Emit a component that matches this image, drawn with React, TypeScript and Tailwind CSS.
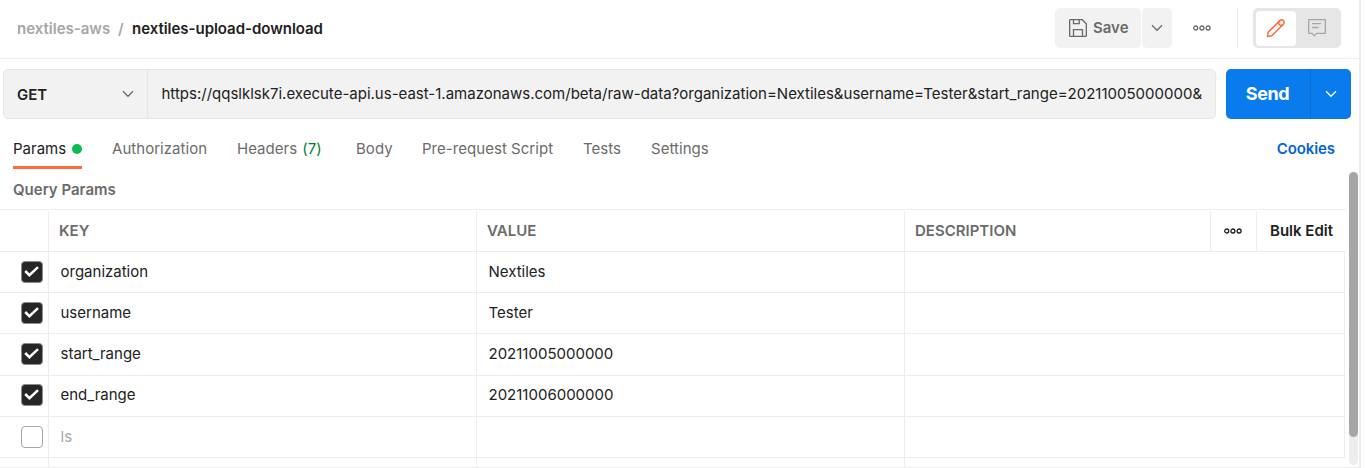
import React from "react";

const PARAMS = [
  { key: "organization", value: "Nextiles", height: "h-[41px]", pad: "pb-0" },
  { key: "username", value: "Tester", height: "h-[41px]", pad: "pb-0" },
  { key: "start_range", value: "20211005000000", height: "h-[42px]", pad: "pb-px" },
  { key: "end_range", value: "20211006000000", height: "h-[41px]", pad: "pb-[2px]" },
];

const TABS = [
  { label: "Authorization", width: "w-[125px]" },
  { label: "Headers", width: "w-[119px]", count: "(7)" },
  { label: "Body", width: "w-[66px]" },
  { label: "Pre-request Script", width: "w-[161px]" },
  { label: "Tests", width: "w-[68px]" },
  { label: "Settings", width: "w-[80px]" },
];

function Chevron({ className }: { className: string }) {
  return (
    <svg width="12" height="8" viewBox="0 0 12 8" fill="none" className={className}>
      <path d="M1 1.3 6 6.3 11 1.3" stroke="currentColor" strokeWidth="1.3" />
    </svg>
  );
}

function Dots({ className }: { className: string }) {
  return (
    <svg width="20" height="6" viewBox="0 0 20 6" fill="none" stroke="currentColor" strokeWidth="1.3" className={className}>
      <circle cx="3.7" cy="3" r="2" />
      <circle cx="9.9" cy="3" r="2" />
      <circle cx="16.1" cy="3" r="2" />
    </svg>
  );
}

function SaveIcon() {
  return (
    <svg width="18" height="18" viewBox="0 0 18 18" fill="none" stroke="#6b6b6b" strokeWidth="1.35">
      <path d="M.65 1.4a.75.75 0 0 1 .75-.75h11.8l4.15 4.15v11.8a.75.75 0 0 1-.75.75H1.4a.75.75 0 0 1-.75-.75z" />
      <path d="M4.5.65v4h5.7v-4" />
      <path d="M4.5 17.35v-6.7h9v6.7" />
    </svg>
  );
}

function PencilIcon() {
  return (
    <svg width="20" height="20" viewBox="0 0 20 20" fill="none" stroke="#ff6c37" strokeWidth="1.5" strokeLinejoin="round">
      <path d="M1.5 18.5 2.2 14.2 13.8 2.6a2.5 2.5 0 0 1 3.6 3.6L5.8 17.8z" />
      <path d="M13.4 3a2.5 2.5 0 0 0 3.6 3.6" />
    </svg>
  );
}

function CommentIcon() {
  return (
    <svg width="18" height="18" viewBox="0 0 18 18" fill="none" stroke="#a6a6a6" strokeWidth="1.35" strokeLinejoin="round">
      <path d="M.65.65h16.7v13.7H8.7L6.4 16.9 4.1 14.35H.65z" />
      <path d="M4 4.6h9M4 8.5h6.5" />
    </svg>
  );
}

function Checkbox({ checked }: { checked?: boolean }) {
  if (!checked) return <span className="h-[22px] w-[22px] rounded-[4px] border border-[#a6a6a6] bg-white" />;
  return (
    <span className="flex h-[22px] w-[22px] items-center justify-center rounded-[4px] border border-[#8c8c8c] bg-[#262626]">
      <svg width="16" height="14" viewBox="0 0 16 14" fill="none" className="shrink-0">
        <path d="m1.2 6 4.2 4.2 8.6-8" stroke="#fff" strokeWidth="2.5" />
      </svg>
    </span>
  );
}

export default function App() {
  return (
    <div className="flex h-[468px] w-[1365px] overflow-hidden bg-white font-['Inter',sans-serif] text-[15px] leading-[20px] text-[#212121]">
      <div className="flex h-[468px] w-[1361px] flex-col border-r-2 border-b border-[#ededed]">
        <header className="flex h-[59px] shrink-0 items-start border-b border-[#ededed]">
          <div className="flex h-[58px] flex-1 items-center pl-[17px] font-semibold">
            <span className="w-[101px] text-[#a6a6a6]">nextiles-aws</span>
            <span className="w-[14px] text-[#a6a6a6]">/</span>
            <span className="tracking-[-0.03px]">nextiles-upload-download</span>
          </div>
          <div className="mt-2 flex h-10 items-center">
            <button className="flex h-10 w-[86px] items-center rounded-[5px] bg-[#f2f2f2] pl-[14px] font-semibold text-[#6b6b6b]">
              <SaveIcon />
              <span className="ml-[6px]">Save</span>
            </button>
            <button className="ml-px flex h-10 w-[30px] items-center justify-center rounded-[5px] bg-[#f2f2f2]">
              <Chevron className="text-[#6b6b6b]" />
            </button>
            <Dots className="ml-5 text-[#6b6b6b]" />
            <div className="ml-[25px] h-10 w-px bg-[#ededed]" />
            <div className="ml-[15px] mr-[18px] flex h-10 w-[88px] items-center rounded-[5px] bg-[#e6e6e6] pl-[3px]">
              <span className="flex h-[35px] w-10 items-center justify-center rounded-[4px] bg-white">
                <PencilIcon />
              </span>
              <span className="ml-3">
                <CommentIcon />
              </span>
            </div>
          </div>
        </header>

        <div className="mt-[10px] flex h-[50px] shrink-0 pl-[3px]">
          <div className="flex w-[1213px] rounded-[5px] border border-[#e6e6e6] bg-[#f2f2f2]">
            <div className="flex w-[144px] items-center justify-between border-r border-[#e6e6e6] pl-[13px] pr-[13px] font-semibold">
              <span className="pt-px">GET</span>
              <Chevron className="text-[#6b6b6b]" />
            </div>
            <div className="ml-[13.5px] flex w-[1041px] items-center overflow-hidden whitespace-nowrap">
              https://qqslklsk7i.execute-api.us-east-1.amazonaws.com/beta/raw-data?organization=Nextiles&amp;username=Tester&amp;start_range=20211005000000&amp;
            </div>
          </div>
          <button className="ml-[10px] flex h-[50px] w-[125px] overflow-hidden rounded-[5px] bg-[#097bed] text-white">
            <span className="flex h-[50px] w-[85px] items-center justify-center border-r border-[#0a6dd0] pr-px text-[18px] font-bold tracking-[-0.4px]">Send</span>
            <span className="flex h-[50px] flex-1 items-center justify-center">
              <Chevron className="text-white" />
            </span>
          </button>
        </div>

        <nav className="flex h-[50px] shrink-0 pl-[13px] pr-6 pt-[20px] text-[#6b6b6b]">
          <div className="mr-[30px] flex h-[30px] w-[69px] items-start justify-between border-b-[3px] border-[#ff6c37] text-[#212121]">
            <span>Params</span>
            <span className="mt-[5px] h-[10px] w-[10px] rounded-full bg-[#0cbb52]" />
          </div>
          {TABS.map((tab) => (
            <div key={tab.label} className={`${tab.width} whitespace-nowrap tracking-[0.04px]`}>
              {tab.label}
              {tab.count && <span className="ml-[5px] text-[#007f31]">{tab.count}</span>}
            </div>
          ))}
          <a className="ml-auto font-semibold tracking-[-0.1px] text-[#0265d2]">Cookies</a>
        </nav>

        <div className="flex h-[298px] shrink-0">
          <section className="flex w-[1346px] flex-col">
            <h2 className="h-[41px] shrink-0 border-b border-[#ededed] pl-[13px] pt-[11px] font-semibold text-[#6b6b6b]">Query Params</h2>
            <div className="flex h-[42px] shrink-0 border-b border-[#ededed] pt-px font-semibold text-[#6b6b6b]">
              <div className="w-[49px] border-r border-[#ededed]" />
              <div className="flex w-[428px] items-center border-r border-[#ededed] pl-[10px]">KEY</div>
              <div className="flex w-[428px] items-center border-r border-[#ededed] pl-[10px]">VALUE</div>
              <div className="flex w-[306px] items-center border-r border-[#ededed] pl-[10px]">DESCRIPTION</div>
              <div className="flex w-[46px] items-center justify-center border-r border-[#ededed] pr-px">
                <Dots className="text-[#212121]" />
              </div>
              <div className="flex flex-1 items-center whitespace-nowrap pl-[13px] text-[#212121]">Bulk Edit</div>
            </div>
            {PARAMS.map((row) => (
              <div key={row.key} className={`${row.height} flex shrink-0 border-b border-[#ededed]`}>
                <div className={`${row.pad} flex w-[49px] items-center justify-end border-r border-[#ededed] pr-[5px]`}>
                  <Checkbox checked />
                </div>
                <div className={`${row.pad} flex w-[428px] items-center border-r border-[#ededed] pl-[11.5px]`}>{row.key}</div>
                <div className={`${row.pad} flex w-[428px] items-center border-r border-[#ededed] pl-[11.5px]`}>{row.value}</div>
                <div className="w-[440px] border-r border-[#ededed]" />
              </div>
            ))}
            <div className="flex h-[41px] shrink-0 border-b border-[#ededed]">
              <div className="flex w-[49px] items-center justify-end border-r border-[#ededed] pr-[5px]">
                <Checkbox />
              </div>
              <div className="flex w-[428px] items-center border-r border-[#ededed] pl-[11.5px] text-[#a6a6a6]">ls</div>
              <div className="w-[428px] border-r border-[#ededed]" />
              <div className="w-[440px] border-r border-[#ededed]" />
            </div>
            <div className="flex h-[9px] shrink-0">
              <div className="w-[49px] border-r border-[#ededed]" />
              <div className="w-[428px] border-r border-[#ededed]" />
              <div className="w-[428px] border-r border-[#ededed]" />
            </div>
          </section>
          <div className="ml-[3px] mt-[3px] h-[293px] w-[9px] rounded-full bg-[#ededed]">
            <div className="h-[265px] w-[9px] rounded-full bg-[#a6a6a6]" />
          </div>
        </div>
      </div>
    </div>
  );
}
